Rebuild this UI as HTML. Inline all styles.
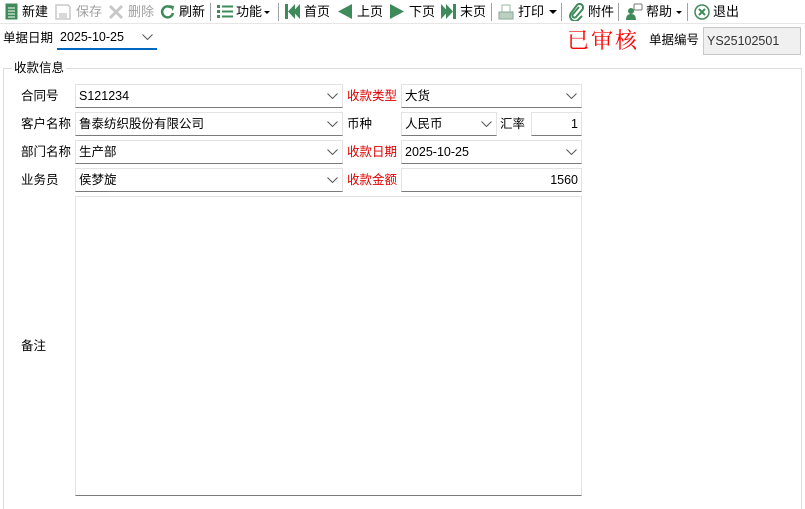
<!DOCTYPE html>
<html style="overflow:hidden;width:805px;height:509px"><head><meta charset="utf-8"><style>
*{margin:0;padding:0;box-sizing:border-box}
body{width:805px;height:509px;background:#fff;position:relative;overflow:hidden;font-family:"Liberation Sans","Noto Sans CJK SC",sans-serif;font-size:12px;color:#000}
.a{position:absolute;white-space:nowrap}
.tb{font-size:13px;top:3px;line-height:17px}
.sep{position:absolute;top:3px;width:1px;height:18px;background:#a0a0a0}
.g{color:#a0a0a0}
.cb{position:absolute;height:24px;background:#fff;border:1px solid #e3e3e3;border-bottom:1px solid #7a7a7a;line-height:22px;padding-left:3px;font-size:12.5px}
.cb svg{position:absolute;right:4px;top:8px}
.lb{position:absolute;font-size:12.5px;line-height:24px}
.red{color:#e00000}
</style></head><body>
<div class="a" style="left:0;top:23px;width:805px;height:1px;background:#e6e6e6"></div>
<svg class="a" style="left:5px;top:3px" width="13" height="17"><rect x="0.5" y="0.5" width="12" height="16" fill="#3f8a5a"/><g stroke="#fff" stroke-width="1"><line x1="3" y1="5" x2="10" y2="5"/><line x1="3" y1="8" x2="10" y2="8"/><line x1="3" y1="11" x2="10" y2="11"/><line x1="3" y1="14" x2="10" y2="14"/></g></svg>
<div class="a tb" style="left:22px">新建</div>
<svg class="a" style="left:55px;top:4px" width="16" height="16"><path d="M1 1h12l2 2v12H1z" fill="none" stroke="#c8c8c8" stroke-width="1.5"/><rect x="4" y="9" width="8" height="6" fill="#d8d8d8"/></svg>
<div class="a tb g" style="left:76px">保存</div>
<svg class="a" style="left:108px;top:4px" width="16" height="16"><path d="M2 2L14 14M14 2L2 14" stroke="#c8c8c8" stroke-width="3"/></svg>
<div class="a tb g" style="left:128px">删除</div>
<svg class="a" style="left:160px;top:4px" width="16" height="16"><path d="M13 9A5.5 5.5 0 1 1 11 3.5" fill="none" stroke="#3f8a5a" stroke-width="2.5"/><path d="M9 1l5 1-1 5z" fill="#3f8a5a"/></svg>
<div class="a tb" style="left:179px">刷新</div>
<div class="sep" style="left:210px"></div>
<svg class="a" style="left:217px;top:5px" width="16" height="13"><g fill="#3f8a5a"><rect x="0" y="0" width="3" height="3"/><rect x="0" y="5" width="3" height="3"/><rect x="0" y="10" width="3" height="3"/><rect x="5" y="0.5" width="11" height="2"/><rect x="5" y="5.5" width="11" height="2"/><rect x="5" y="10.5" width="11" height="2"/></g></svg>
<div class="a tb" style="left:236px">功能</div>
<svg class="a" style="left:264px;top:11px" width="6" height="4"><path d="M0 0h6L3 3z" fill="#000"/></svg>
<div class="sep" style="left:278px"></div>
<svg class="a" style="left:285px;top:4px" width="16" height="15"><g fill="#3f8a5a"><rect x="0" y="0" width="3" height="15"/><path d="M3 7.5L10 0v15z"/><path d="M8 7.5L15 0v15z"/></g></svg>
<div class="a tb" style="left:304px">首页</div>
<svg class="a" style="left:338px;top:4px" width="14" height="15"><path d="M0 7.5L14 0v15z" fill="#3f8a5a"/></svg>
<div class="a tb" style="left:357px">上页</div>
<svg class="a" style="left:390px;top:4px" width="14" height="15"><path d="M14 7.5L0 0v15z" fill="#3f8a5a"/></svg>
<div class="a tb" style="left:409px">下页</div>
<svg class="a" style="left:441px;top:4px" width="16" height="15"><g fill="#3f8a5a"><path d="M0 0l7 7.5L0 15z"/><path d="M5 0l7 7.5L5 15z"/><rect x="12" y="0" width="3" height="15"/></g></svg>
<div class="a tb" style="left:460px">末页</div>
<div class="sep" style="left:491px"></div>
<svg class="a" style="left:498px;top:4px" width="16" height="16"><rect x="4" y="1" width="8" height="7" fill="none" stroke="#9bb7a3"/><rect x="1" y="8" width="14" height="7" fill="#bcd0c2" stroke="#8aa894"/></svg>
<div class="a tb" style="left:518px">打印</div>
<svg class="a" style="left:549px;top:10px" width="8" height="5"><path d="M0 0h8L4 4z" fill="#000"/></svg>
<div class="sep" style="left:561px"></div>
<svg class="a" style="left:569px;top:3px" width="15" height="18"><path d="M10 4L4 11a2 2 0 0 0 3 3l6-7a3.5 3.5 0 0 0-5-5L2 10a5 5 0 0 0 7 7l4-4" fill="none" stroke="#3f8a5a" stroke-width="2"/></svg>
<div class="a tb" style="left:588px">附件</div>
<div class="sep" style="left:618px"></div>
<svg class="a" style="left:626px;top:3px" width="17" height="17"><circle cx="5" cy="8" r="3" fill="#3f8a5a"/><path d="M0 17q0-6 5-6t5 6z" fill="#3f8a5a"/><rect x="8" y="1" width="8" height="6" rx="1" fill="#fff" stroke="#777"/></svg>
<div class="a tb" style="left:646px">帮助</div>
<svg class="a" style="left:676px;top:11px" width="6" height="4"><path d="M0 0h6L3 3z" fill="#000"/></svg>
<div class="sep" style="left:687px"></div>
<svg class="a" style="left:694px;top:4px" width="16" height="16"><circle cx="8" cy="8" r="7" fill="#fff" stroke="#3f8a5a" stroke-width="1.5"/><path d="M5 5l6 6M11 5l-6 6" stroke="#3f8a5a" stroke-width="2"/></svg>
<div class="a tb" style="left:713px">退出</div>

<div class="lb" style="left:3px;top:26px">单据日期</div>
<div class="a" style="left:57px;top:27px;width:100px;height:23px;border-bottom:2px solid #0067c0;font-size:12.5px;line-height:20px;padding-left:3px">2025-10-25<svg style="position:absolute;right:4px;top:7px" width="11" height="6"><path d="M0.5 0.5L5.5 5.5L10.5 0.5" fill="none" stroke="#555"/></svg></div>
<div class="a" style="left:567px;top:26px;font-family:'Noto Serif CJK SC',serif;font-size:22px;color:#ff0000;line-height:28px;letter-spacing:2px">已审核</div>
<div class="lb" style="left:649px;top:28px">单据编号</div>
<div class="a" style="left:703px;top:27px;width:98px;height:28px;background:#f0f0f0;border:1px solid #c8c8c8;line-height:26px;padding-left:3px;font-size:12.5px;color:#333">YS25102501</div>

<div class="a" style="left:3px;top:68px;width:799px;height:441px;border:1px solid #dcdcdc;border-bottom:none"></div>
<div class="a" style="left:12px;top:60px;background:#fff;padding:0 2px;font-size:12.5px;line-height:16px">收款信息</div>

<div class="lb" style="left:21px;top:84px">合同号</div>
<div class="lb" style="left:21px;top:112px">客户名称</div>
<div class="lb" style="left:21px;top:140px">部门名称</div>
<div class="lb" style="left:21px;top:168px">业务员</div>
<div class="lb" style="left:21px;top:334px">备注</div>

<div class="cb" style="left:75px;top:84px;width:268px">S121234<svg width="11" height="6"><path d="M0.5 0.5L5.5 5.5L10.5 0.5" fill="none" stroke="#555"/></svg></div>
<div class="cb" style="left:75px;top:112px;width:268px">鲁泰纺织股份有限公司<svg width="11" height="6"><path d="M0.5 0.5L5.5 5.5L10.5 0.5" fill="none" stroke="#555"/></svg></div>
<div class="cb" style="left:75px;top:140px;width:268px">生产部<svg width="11" height="6"><path d="M0.5 0.5L5.5 5.5L10.5 0.5" fill="none" stroke="#555"/></svg></div>
<div class="cb" style="left:75px;top:168px;width:268px">侯梦旋<svg width="11" height="6"><path d="M0.5 0.5L5.5 5.5L10.5 0.5" fill="none" stroke="#555"/></svg></div>

<div class="lb red" style="left:347px;top:84px">收款类型</div>
<div class="lb" style="left:347px;top:112px">币种</div>
<div class="lb red" style="left:347px;top:140px">收款日期</div>
<div class="lb red" style="left:347px;top:168px">收款金额</div>

<div class="cb" style="left:401px;top:84px;width:181px">大货<svg width="11" height="6"><path d="M0.5 0.5L5.5 5.5L10.5 0.5" fill="none" stroke="#555"/></svg></div>
<div class="cb" style="left:401px;top:112px;width:96px">人民币<svg width="11" height="6"><path d="M0.5 0.5L5.5 5.5L10.5 0.5" fill="none" stroke="#555"/></svg></div>
<div class="lb" style="left:500px;top:112px">汇率</div>
<div class="cb" style="left:531px;top:112px;width:51px;text-align:right;padding-right:3px">1</div>
<div class="cb" style="left:401px;top:140px;width:181px">2025-10-25<svg width="11" height="6"><path d="M0.5 0.5L5.5 5.5L10.5 0.5" fill="none" stroke="#555"/></svg></div>
<div class="cb" style="left:401px;top:168px;width:181px;text-align:right;padding-right:3px">1560</div>

<div class="cb" style="left:75px;top:196px;width:507px;height:300px"></div>
</body></html>
